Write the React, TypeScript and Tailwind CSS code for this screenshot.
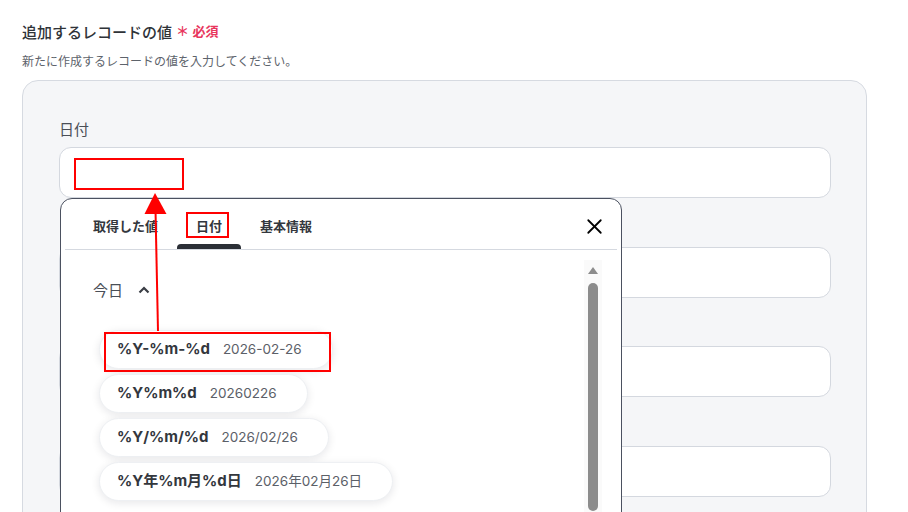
import { X } from "lucide-react";

const FONT = { fontFamily: '"Noto Sans", "Noto Sans CJK JP", sans-serif' };
const CHIP_FONT = { fontFamily: 'Inter, "Noto Sans CJK JP", sans-serif' };

const formats = [
  { fmt: "%Y-%m-%d", value: "2026-02-26", marked: true },
  { fmt: "%Y%m%d", value: "20260226" },
  { fmt: "%Y/%m/%d", value: "2026/02/26" },
  { fmt: "%Y年%m月%d日", value: "2026年02月26日" },
];

const Field = ({ label, marked }: { label?: string; marked?: boolean }) => (
  <div className="flex flex-col">
    <div className="h-5 leading-5 text-[15px] text-[#4a4f57] mb-2">{label ?? ""}</div>
    <div className="relative h-[51px] bg-white border border-[#d4d8df] rounded-xl">
      {marked && (
        <span className="absolute left-[14px] top-[10px] w-[110px] h-[32px] border-2 border-[#ff0000]" />
      )}
    </div>
  </div>
);

const Tab = ({ label, active }: { label: string; active?: boolean }) => (
  <div className="relative h-[50px] px-[19px] pt-[6px] flex items-center text-[13px] font-bold text-[#33373d]">
    {label}
    {active && (
      <>
        <span className="absolute left-[9px] right-[12px] top-[13px] bottom-[11px] border-2 border-[#ff0000]" />
        <span className="absolute left-0 right-0 bottom-0 h-[5px] rounded-t-[4px] bg-[#2b2f36]" />
      </>
    )}
  </div>
);

export default function App() {
  return (
    <div className="relative w-[908px] h-[512px] overflow-hidden bg-white" style={FONT}>
      <div className="pl-[22px] pt-[20px]">
        <div className="flex items-center h-6">
          <span className="text-[15px] font-medium text-[#2f3338]">追加するレコードの値</span>
          <span className="ml-[4px] text-[13px] font-bold text-[#e8365d]">＊ 必須</span>
        </div>
        <p className="mt-[9px] h-[18px] leading-[18px] text-[12px] text-[#5d636b]">
          新たに作成するレコードの値を入力してください。
        </p>
        <div className="mt-[9px] w-[845px] h-[460px] bg-[#f5f6f8] border border-[#d6dae1] rounded-2xl pl-[36px] pr-[35px] pt-[38px] flex flex-col gap-[20.5px]">
          <Field label="日付" marked />
          <Field />
          <Field />
          <Field />
        </div>
      </div>

      {/* picker popup */}
      <div className="absolute left-[60px] top-[198px] w-[562px] h-[340px] bg-white border border-[#4b5160] rounded-t-xl">
        <div className="relative mx-[4px] flex items-end pl-[9px] border-b border-[#d5d9e0]">
          <Tab label="取得した値" />
          <Tab label="日付" active />
          <Tab label="基本情報" />
          <X className="absolute right-[10px] top-[15px] w-[25px] h-[25px] text-black" strokeWidth={1.7} />
        </div>
        <div className="relative pl-[32px] pt-[30px]">
          <div className="flex items-center h-5 text-[15px] text-[#4a4f57]">
            今日
            <svg className="ml-[15px] w-[12px] h-[8px]" viewBox="0 0 12 8">
              <path d="M1.5 6.5 L6 2 L10.5 6.5" fill="none" stroke="#3a3e45" strokeWidth="2.2" />
            </svg>
          </div>
          <div className="mt-[30px] ml-[6px] flex flex-col items-start gap-[5px]" style={CHIP_FONT}>
            {formats.map((f) => (
              <div
                key={f.fmt}
                className="relative h-[39px] flex items-center gap-[13px] pl-[17px] pr-[30px] rounded-full bg-white border border-[#eef0f3] shadow-[0_2px_8px_rgba(15,23,42,0.10)]"
              >
                <span className="text-[15px] font-bold text-[#33373d]">{f.fmt}</span>
                <span className="text-[13.5px] text-[#5b6068]">{f.value}</span>
                {f.marked && (
                  <span className="absolute left-[4px] top-[1px] w-[227px] h-[40px] border-2 border-[#ff0000]" />
                )}
              </div>
            ))}
          </div>
          {/* scrollbar */}
          <div className="absolute right-[19px] top-[10px] w-[18px] h-[260px] bg-[#fafafa] flex flex-col items-center pt-[7px]">
            <svg className="w-[10px] h-[7px]" viewBox="0 0 10 7">
              <path d="M5 0 L10 7 L0 7 Z" fill="#8c8c8c" />
            </svg>
            <div className="mt-[9px] w-[10px] h-[228px] rounded-full bg-[#8c8c8c]" />
          </div>
        </div>
      </div>

      {/* annotation arrow */}
      <svg className="absolute left-0 top-0 pointer-events-none" width="908" height="512">
        <line x1="158" y1="331" x2="155.5" y2="210" stroke="#ff0000" strokeWidth="2" />
        <path d="M155 193 L166.5 214 L144.5 214 Z" fill="#ff0000" />
      </svg>
    </div>
  );
}
